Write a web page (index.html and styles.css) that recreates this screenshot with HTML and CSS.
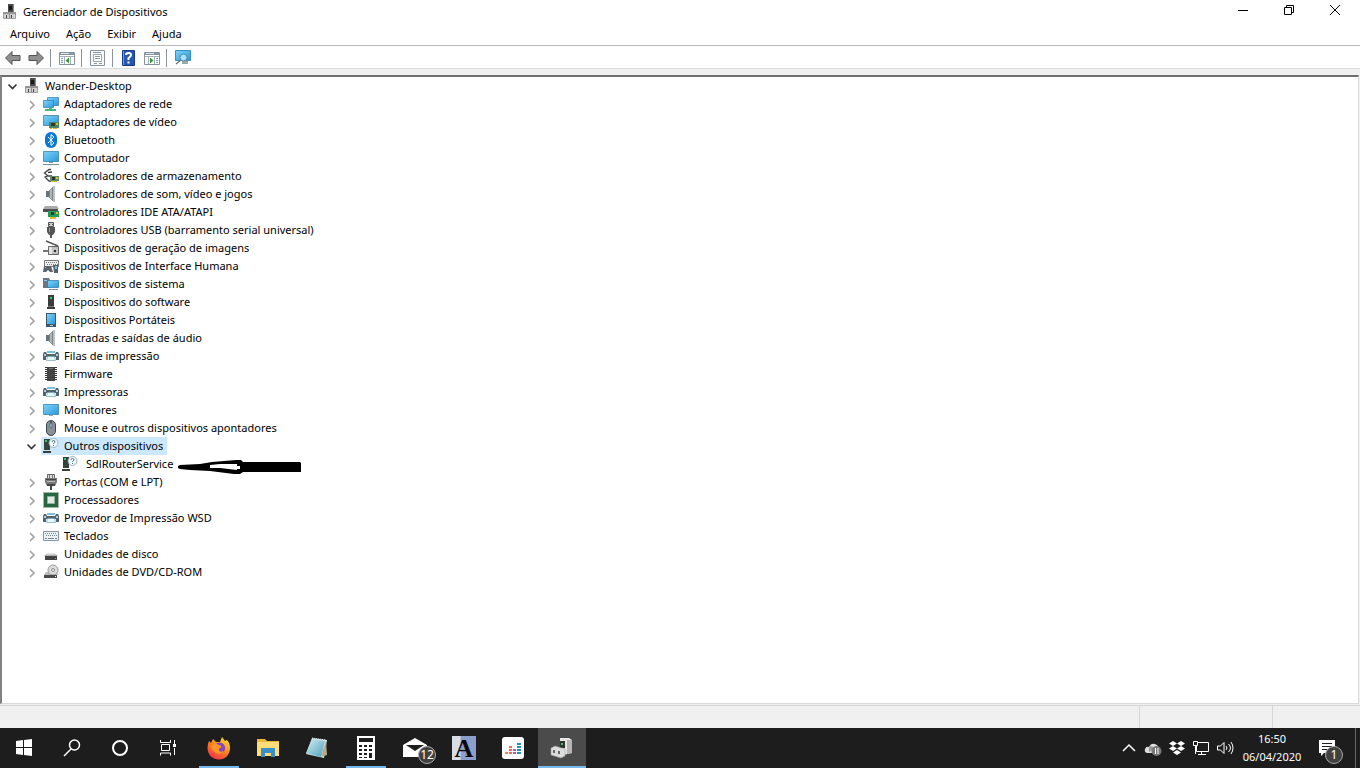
FILE: index.html
```html
<!DOCTYPE html>
<html lang="pt-BR">
<head>
<meta charset="utf-8">
<title>Gerenciador de Dispositivos</title>
<link rel="stylesheet" href="styles.css">
</head>
<body>
<svg class="sprite" aria-hidden="true">
  <defs>
    <linearGradient id="g-blue" x1="0" y1="0" x2="1" y2="1"><stop offset="0" stop-color="#7fd3f7"/><stop offset="1" stop-color="#2a98dc"/></linearGradient>
    <linearGradient id="g-grey" x1="0" y1="0" x2="1" y2="0"><stop offset="0" stop-color="#777"/><stop offset=".5" stop-color="#c8c8c8"/><stop offset="1" stop-color="#777"/></linearGradient>
    <linearGradient id="g-drive" x1="0" y1="0" x2="0" y2="1"><stop offset="0" stop-color="#f4f4f4"/><stop offset="1" stop-color="#a8a8a8"/></linearGradient>
    <linearGradient id="g-fox" x1=".8" y1="0" x2=".2" y2="1"><stop offset="0" stop-color="#ffe226"/><stop offset=".45" stop-color="#ff8a1c"/><stop offset="1" stop-color="#f5274f"/></linearGradient>
    <linearGradient id="g-note" x1="0" y1="0" x2="1" y2="1"><stop offset="0" stop-color="#d5f0f5"/><stop offset="1" stop-color="#4a9fb8"/></linearGradient>
    <symbol id="pc" viewBox="0 0 16 16"><path fill="#4a4a4a" d="M6 0h6v9H6z"/><path fill="#1a1a1a" d="M7 2h3v4H7z"/><path fill="#888" d="M11 0h1v9h-1z"/><path fill="#999" d="M1 8h13v2H1z"/><path fill="#d2d2d2" stroke="#8a8a8a" stroke-width=".8" d="M1.500 9.500h6v5h-6zM7.500 9.500h6v5h-6z"/><path fill="#444" d="M4 11h1v3H4zm5 0h1v3H9z"/></symbol>
    <symbol id="net" viewBox="0 0 16 16"><path fill="url(#g-blue)" stroke="#297eac" stroke-width=".7" d="M4.500 1.500h11v8h-11z"/><path fill="url(#g-blue)" stroke="#297eac" stroke-width=".7" d="M.500 4.500h10v7H.500z"/><path fill="#43b77a" d="M6 11.500h3V13h4v2H2v-2h4z"/></symbol>
    <symbol id="video" viewBox="0 0 16 16"><path fill="url(#g-blue)" stroke="#376f8c" stroke-width=".7" d="M.500 1.500h15v10H.500z"/><path fill="#4d8568" d="M6 8h10v6H6z"/><path fill="#253d31" d="M8 9h4v3H8z"/><path fill="#ecb51c" d="M7 14h2v1H7zm3 0h4v1h-4zm3-5h2v2h-2z"/></symbol>
    <symbol id="bt" viewBox="0 0 16 16"><rect x="2" width="12" height="16" rx="6" fill="#0878d4"/><path d="M5 5l6 6-3 2.500v-11L11 5l-6 6" fill="none" stroke="#fff"/></symbol>
    <symbol id="monitor" viewBox="0 0 16 16"><path fill="url(#g-blue)" stroke="#3586b1" stroke-width=".8" d="M.500 2.500h15v10H.500z"/><path fill="#98a7b0" d="M6 13h4v1H6z"/></symbol>
    <symbol id="computer" viewBox="0 0 16 16"><path fill="url(#g-blue)" stroke="#3586b1" stroke-width=".8" d="M.500 1.500h15v10H.500z"/><path fill="#7690a0" d="M0 14h16v1H0zm6-2h4v1H6z"/></symbol>
    <symbol id="storage" viewBox="0 0 16 16"><path fill="none" stroke="#444" stroke-width="1.300" d="M8 1.500L6 1.500 1.500 5 5 8h4M9 4L5 4.500M5 8l-3 1 4 4h2"/><path fill="#668672" d="M7 8h9v5H7z"/><path fill="#26372c" d="M9 9h3v3H9z"/><path fill="#d3c538" d="M8 13h6v1H8zm5-4h2v2h-2z"/></symbol>
    <symbol id="speaker" viewBox="0 0 16 16"><path fill="#67727a" d="M3 5h3v6H3z"/><path fill="url(#g-grey)" stroke="#65727c" stroke-width=".6" d="M6 5l4-4v14l-4-4z"/><path fill="#b7c2c9" d="M10 0h2v16h-2z"/></symbol>
    <symbol id="ide" viewBox="0 0 16 16"><path fill="#aaa" d="M2 2h12l2 3H0z"/><path fill="#4e4e4e" d="M0 5h15v3H0z"/><path fill="#249c58" d="M5 7h11v6H5z"/><path fill="#263e31" d="M8 8h3v3H8z"/><path fill="#e8b92f" d="M7 13h6v2H7zm6-5h2v2h-2z"/></symbol>
    <symbol id="usb" viewBox="0 0 16 16"><path fill="#ccc" stroke="#555" d="M5.500.500h5v4h-5z"/><path fill="#555" d="M6 2h1v1H6zm3 0h1v1H9zM4 5h8v5l-2 3H6l-2-3z"/><path fill="#999" d="M6 6h1v4H6z"/><path fill="#555" d="M7 12h2v4H7z"/></symbol>
    <symbol id="camera" viewBox="0 0 16 16"><path stroke="#555" stroke-width="1.500" d="M3 1l12 5"/><path stroke="#777" stroke-width="2" d="M0 11h6"/><path fill="#bbb" stroke="#666" d="M5.500 6.500h10v8h-10z"/><path fill="#e5e5e5" d="M6 7h3v7H6z"/><circle cx="12" cy="11" r="2" fill="#333" stroke="#eee"/></symbol>
    <symbol id="hid" viewBox="0 0 16 16"><path fill="#eee" stroke="#777" d="M1.500 2.500h14v6h-14z"/><path stroke="#777" stroke-dasharray="1 1" d="M3 4.500h12M4 6.500h11"/><path fill="#58636b" d="M1 8h7l2 6H7l-2-2-2 2H0zM10 7h5v8h-4z"/><path fill="#79bde9" d="M2 9h1v1H2zm10-1h2v3h-2z"/></symbol>
    <symbol id="system" viewBox="0 0 16 16"><path fill="#697783" d="M0 2h6l1 2v8H0z"/><path fill="#86ccff" d="M1 4h3v1H1z"/><path fill="url(#g-blue)" stroke="#2676a5" stroke-width=".7" d="M4.500 4.500h11v7h-11z"/><path fill="#80919c" d="M6 13h9v1H6z"/></symbol>
    <symbol id="software" viewBox="0 0 16 16"><path fill="#3b3b3b" d="M5 1h6v11H5zM4 13h8v2H4z"/><path fill="#777" d="M5 12h6v1H5z"/><path fill="#27d56c" d="M7 3h2v2H7z"/></symbol>
    <symbol id="portable" viewBox="0 0 16 16"><path fill="#3a596b" d="M3 1h10v14H3z"/><path fill="url(#g-blue)" d="M4 2h8v10H4z"/><path fill="#c0d4dd" d="M7 13h3v1H7z"/></symbol>
    <symbol id="printer" viewBox="0 0 16 16"><path fill="#7cc0e0" d="M4 3h8v2H4z"/><path fill="#506570" d="M1 4h2l1 2h8l1-2h2l1 2v6h-3V9H3v3H0V6z"/><path fill="#c1cdd4" d="M1 6h2v2H1zm12 0h2v2h-2z"/><path fill="#e6f9ff" stroke="#77a5b7" stroke-width=".7" d="M4.500 8.500h7l1 4h-9z"/></symbol>
    <symbol id="chip" viewBox="0 0 16 16"><path fill="#444" d="M4 1h8v14H4z"/><path stroke="#333" stroke-width="2" stroke-dasharray="1 1" d="M3 1v14M13 1v14"/><path fill="#777" d="M6 2h4v1H6z"/></symbol>
    <symbol id="mouse" viewBox="0 0 16 16"><rect x="3.500" y=".500" width="9" height="15" rx="4.500" fill="#899097" stroke="#3c454d"/><path stroke="#333" d="M8 1v6"/><rect x="7" y="3" width="2" height="5" rx="1" fill="#9cd7f3" stroke="#334" stroke-width=".6"/></symbol>
    <symbol id="unknown" viewBox="0 0 16 16"><path fill="#34423b" d="M1 1h6v11H1zM0 13h8v2H0z"/><path fill="#37c770" d="M2 2h2v2H2z"/><circle cx="10.500" cy="5" r="4.500" fill="#f5faff" stroke="#89a2b0" stroke-width=".8"/><path fill="none" stroke="#466e7c" d="M9 4q0-1.500 1.500-1.500t1.500 1.500q0 .7-1.500 1.500v.5M10.500 7v1"/></symbol>
    <symbol id="port" viewBox="0 0 16 16"><path fill="#ddd" stroke="#666" d="M4.500.500h7v4h-7z"/><path stroke="#777" d="M6.500 1v3M9.500 1v3"/><path fill="#777" d="M2 4h12v4l-2 4H4L2 8z"/><path fill="#444" d="M3 5h10v1H3zm1 5h8v2H4zm3 2h2v4H7z"/><path stroke="#bbb" d="M4 7.500h8"/></symbol>
    <symbol id="cpu" viewBox="0 0 16 16"><path fill="#286642" d="M1 1h14v14H1z"/><path fill="none" stroke="#477556" stroke-dasharray="1 1" d="M.500.500h15v15H.500z"/><path fill="#e2e8e3" stroke="#95b19d" d="M4.500 4.500h7v7h-7z"/></symbol>
    <symbol id="keyboard" viewBox="0 0 16 16"><path fill="#edf2f5" stroke="#8496a3" d="M.500 3.500h15v9H.500z"/><path stroke="#758896" stroke-dasharray="1 1" d="M2 5.500h12M3 7.500h11"/><path stroke="#758896" d="M2 10.500h2m1 0h6m1 0h2"/></symbol>
    <symbol id="disk" viewBox="0 0 16 16"><path fill="url(#g-drive)" d="M4 7h8l3 3H1z"/><path fill="#444" d="M2 10h12v4H2z"/><path fill="#3dd478" d="M12 12h1v1h-1z"/></symbol>
    <symbol id="dvd" viewBox="0 0 16 16"><path fill="#bbb" d="M3 8h11l1 3H1z"/><circle cx="10" cy="6" r="5" fill="#ddd" stroke="#999"/><circle cx="10" cy="6" r="1.500" fill="#fff" stroke="#888"/><path fill="#4b4b4b" d="M1 11h13v3H1z"/><path fill="#eee" d="M12 12h1v1h-1z"/></symbol>
    <symbol id="chev" viewBox="0 0 12 12"><path fill="none" stroke="currentColor" stroke-width="1.600" d="M5 3l4 4-4 4"/></symbol>
    <symbol id="chev-down" viewBox="0 0 12 12"><path fill="none" stroke="currentColor" stroke-width="1.600" d="M2.500 4.500l4 4 4-4"/></symbol>
  </defs>
</svg>

<div class="screen">
  <header class="titlebar">
    <svg class="icon"><use href="#pc"/></svg>
    <h1 class="title">Gerenciador de Dispositivos</h1>
    <div class="window-buttons">
      <button class="window-button" aria-label="Minimizar"><svg viewBox="0 0 12 12"><path d="M1 6.500h10"/></svg></button>
      <button class="window-button" aria-label="Restaurar"><svg viewBox="0 0 12 12"><path d="M1.500 3.500h7v7h-7zM3.500 3.500v-2h7v7h-2"/></svg></button>
      <button class="window-button" aria-label="Fechar"><svg viewBox="0 0 12 12"><path d="M1 1l10 10M11 1L1 11"/></svg></button>
    </div>
  </header>
  <nav class="menubar">
    <button class="menu">Arquivo</button><button class="menu">Ação</button><button class="menu">Exibir</button><button class="menu">Ajuda</button>
  </nav>
  <div class="toolbar" role="toolbar" aria-label="Ferramentas">
    <button class="tool" aria-label="Voltar"><svg viewBox="0 0 18 18"><path fill="#909090" stroke="#555" d="M1.500 9L8 2.500v4h8v5H8v4z"/></svg></button>
    <button class="tool" aria-label="Avançar"><svg viewBox="0 0 18 18"><path fill="#909090" stroke="#555" d="M16.500 9L10 2.500v4H2v5h8v4z"/></svg></button>
    <span class="separator"></span>
    <button class="tool" aria-label="Mostrar árvore"><svg viewBox="0 0 18 18"><path fill="#fff" stroke="#8794a0" d="M1.500 3.500h15v12h-15z"/><path fill="#8794a0" d="M2 4h14v2H2z"/><path stroke="#dfe7ed" d="M3 4.500h8"/><path stroke="#a6b0b9" d="M2 7.500h14M6.500 8v7M12.500 8v7"/><path stroke="#6c9bc5" d="M3 9.500h2m-2 2h2m-2 2h2"/><path fill="#39953d" d="M11 8.500v6l-3.500-3z"/></svg></button>
    <span class="separator"></span>
    <button class="tool" aria-label="Propriedades"><svg viewBox="0 0 18 18"><path fill="#f5f7f8" stroke="#87929a" d="M1.500 1.500h14v15h-14z"/><path fill="#fff" stroke="#9ba5ac" d="M4.500 5.500h8v7h-8z"/><path stroke="#8b98a3" d="M4 3.500h8M6 7.500h5m-5 2h5M5 14.500h3m2 0h3"/></svg></button>
    <span class="separator"></span>
    <button class="tool" aria-label="Ajuda"><svg viewBox="0 0 18 18"><path fill="#2856b3" stroke="#163c85" d="M2.500 1.500h12v15h-12z"/><path stroke="#769ddd" d="M3.500 2v14"/><path fill="none" stroke="#fff" stroke-width="2" d="M6 6q0-2 2.500-2T11 6q0 1.500-2.500 3v2M8.500 12.500v2"/></svg></button>
    <button class="tool" aria-label="Mostrar ações"><svg viewBox="0 0 18 18"><path fill="#fff" stroke="#8794a0" d="M1.500 3.500h15v12h-15z"/><path fill="#8794a0" d="M2 4h14v2H2z"/><path stroke="#dfe7ed" d="M3 4.500h8"/><path stroke="#a6b0b9" d="M2 7.500h14M5.500 8v7M11.500 8v7"/><path stroke="#6c9bc5" d="M13 9.500h2m-2 2h2m-2 2h2"/><path fill="#39953d" d="M7 8.500v6l3.500-3z"/></svg></button>
    <span class="separator"></span>
    <button class="tool" aria-label="Verificar alterações de hardware"><svg viewBox="0 0 18 18"><path fill="url(#g-blue)" stroke="#398fb9" d="M1.500 1.500h15v10h-15z"/><path fill="#9aa" d="M8 12h6v3H8z"/><circle cx="9.500" cy="8.500" r="3.500" fill="#a8e2ff" stroke="#518baa"/><path stroke="#678" stroke-width="1.500" d="M7 11l-5 4"/></svg></button>
  </div>

  <main class="tree-pane">
    <ul class="tree">
      <li>
        <div class="row root"><button class="expander open" aria-label="Recolher"><svg><use href="#chev-down"/></svg></button><span class="node"><svg class="icon"><use href="#pc"/></svg>Wander-Desktop</span></div>
        <ul class="tree">
          <li class="row"><button class="expander" aria-label="Expandir"><svg><use href="#chev"/></svg></button><span class="node"><svg class="icon"><use href="#net"/></svg>Adaptadores de rede</span></li>
          <li class="row"><button class="expander" aria-label="Expandir"><svg><use href="#chev"/></svg></button><span class="node"><svg class="icon"><use href="#video"/></svg>Adaptadores de vídeo</span></li>
          <li class="row"><button class="expander" aria-label="Expandir"><svg><use href="#chev"/></svg></button><span class="node"><svg class="icon"><use href="#bt"/></svg>Bluetooth</span></li>
          <li class="row"><button class="expander" aria-label="Expandir"><svg><use href="#chev"/></svg></button><span class="node"><svg class="icon"><use href="#computer"/></svg>Computador</span></li>
          <li class="row"><button class="expander" aria-label="Expandir"><svg><use href="#chev"/></svg></button><span class="node"><svg class="icon"><use href="#storage"/></svg>Controladores de armazenamento</span></li>
          <li class="row"><button class="expander" aria-label="Expandir"><svg><use href="#chev"/></svg></button><span class="node"><svg class="icon"><use href="#speaker"/></svg>Controladores de som, vídeo e jogos</span></li>
          <li class="row"><button class="expander" aria-label="Expandir"><svg><use href="#chev"/></svg></button><span class="node"><svg class="icon"><use href="#ide"/></svg>Controladores IDE ATA/ATAPI</span></li>
          <li class="row"><button class="expander" aria-label="Expandir"><svg><use href="#chev"/></svg></button><span class="node"><svg class="icon"><use href="#usb"/></svg>Controladores USB (barramento serial universal)</span></li>
          <li class="row"><button class="expander" aria-label="Expandir"><svg><use href="#chev"/></svg></button><span class="node"><svg class="icon"><use href="#camera"/></svg>Dispositivos de geração de imagens</span></li>
          <li class="row"><button class="expander" aria-label="Expandir"><svg><use href="#chev"/></svg></button><span class="node"><svg class="icon"><use href="#hid"/></svg>Dispositivos de Interface Humana</span></li>
          <li class="row"><button class="expander" aria-label="Expandir"><svg><use href="#chev"/></svg></button><span class="node"><svg class="icon"><use href="#system"/></svg>Dispositivos de sistema</span></li>
          <li class="row"><button class="expander" aria-label="Expandir"><svg><use href="#chev"/></svg></button><span class="node"><svg class="icon"><use href="#software"/></svg>Dispositivos do software</span></li>
          <li class="row"><button class="expander" aria-label="Expandir"><svg><use href="#chev"/></svg></button><span class="node"><svg class="icon"><use href="#portable"/></svg>Dispositivos Portáteis</span></li>
          <li class="row"><button class="expander" aria-label="Expandir"><svg><use href="#chev"/></svg></button><span class="node"><svg class="icon"><use href="#speaker"/></svg>Entradas e saídas de áudio</span></li>
          <li class="row"><button class="expander" aria-label="Expandir"><svg><use href="#chev"/></svg></button><span class="node"><svg class="icon"><use href="#printer"/></svg>Filas de impressão</span></li>
          <li class="row"><button class="expander" aria-label="Expandir"><svg><use href="#chev"/></svg></button><span class="node"><svg class="icon"><use href="#chip"/></svg>Firmware</span></li>
          <li class="row"><button class="expander" aria-label="Expandir"><svg><use href="#chev"/></svg></button><span class="node"><svg class="icon"><use href="#printer"/></svg>Impressoras</span></li>
          <li class="row"><button class="expander" aria-label="Expandir"><svg><use href="#chev"/></svg></button><span class="node"><svg class="icon"><use href="#monitor"/></svg>Monitores</span></li>
          <li class="row"><button class="expander" aria-label="Expandir"><svg><use href="#chev"/></svg></button><span class="node"><svg class="icon"><use href="#mouse"/></svg>Mouse e outros dispositivos apontadores</span></li>
          <li>
            <div class="row"><button class="expander open" aria-label="Recolher"><svg><use href="#chev-down"/></svg></button><span class="node selected"><svg class="icon"><use href="#unknown"/></svg>Outros dispositivos</span></div>
            <ul class="tree">
              <li class="row leaf"><span class="node"><svg class="icon"><use href="#unknown"/></svg>SdlRouterService</span>
                <svg class="arrow" viewBox="0 0 124 16"><path d="M0 7l2-1 20-1 12-2 24-2h5l2 2h57l1 1v9H65l-3 2h-6l-24-3-20-1-10-1-2-1z"/><path fill="#fff" d="M32 6l10-1h17v2h3v3h-3v1L42 9H32z"/></svg></li>
            </ul>
          </li>
          <li class="row"><button class="expander" aria-label="Expandir"><svg><use href="#chev"/></svg></button><span class="node"><svg class="icon"><use href="#port"/></svg>Portas (COM e LPT)</span></li>
          <li class="row"><button class="expander" aria-label="Expandir"><svg><use href="#chev"/></svg></button><span class="node"><svg class="icon"><use href="#cpu"/></svg>Processadores</span></li>
          <li class="row"><button class="expander" aria-label="Expandir"><svg><use href="#chev"/></svg></button><span class="node"><svg class="icon"><use href="#printer"/></svg>Provedor de Impressão WSD</span></li>
          <li class="row"><button class="expander" aria-label="Expandir"><svg><use href="#chev"/></svg></button><span class="node"><svg class="icon"><use href="#keyboard"/></svg>Teclados</span></li>
          <li class="row"><button class="expander" aria-label="Expandir"><svg><use href="#chev"/></svg></button><span class="node"><svg class="icon"><use href="#disk"/></svg>Unidades de disco</span></li>
          <li class="row"><button class="expander" aria-label="Expandir"><svg><use href="#chev"/></svg></button><span class="node"><svg class="icon"><use href="#dvd"/></svg>Unidades de DVD/CD-ROM</span></li>
        </ul>
      </li>
    </ul>
  </main>
  <div class="statusbar"><span class="status-main"></span><span class="status-a"></span><span class="status-b"></span></div>

  <footer class="taskbar">
    <div class="system-buttons">
      <button class="task" aria-label="Iniciar"><svg viewBox="0 0 24 24"><path fill="#fff" d="M4 5l7-1v7H4zm8-1l8-1v8h-8zM4 12h7v7l-7-1zm8 0h8v8l-8-1z"/></svg></button>
      <button class="task" aria-label="Pesquisar"><svg viewBox="0 0 24 24"><g fill="none" stroke="#fff" stroke-width="1.500"><circle cx="14.500" cy="9" r="5"/><path d="M11 13l-7 7"/></g></svg></button>
      <button class="task" aria-label="Cortana"><svg viewBox="0 0 24 24"><circle cx="12" cy="12" r="7" fill="none" stroke="#fff" stroke-width="2"/></svg></button>
      <button class="task" aria-label="Visão de tarefas"><svg viewBox="0 0 24 24"><path fill="none" stroke="#fff" d="M4.500 4v2.500h10V4M4.500 19.500V17h10v2.500M5.500 8.500h8v6h-8zM18.500 4v4m0 4v7"/><path fill="#fff" d="M17 8h3v3h-3z"/></svg></button>
    </div>
    <div class="apps">
      <button class="task running" aria-label="Firefox"><svg viewBox="0 0 24 24"><path fill="url(#g-fox)" d="M2 5l2 2 2-4 3 3 4 0 2-5 3 4 2-1q3 3 3 8c0 7-5 11.500-11 11.500S.500 19 .500 12q0-4 1.500-7z"/><circle cx="12.500" cy="12" r="5.500" fill="#743bc5"/><path fill="#ff9724" d="M4 9q4-3 8 0l4 1-4 3q0 3 5 2-3 5-8 2t-5-8z"/><path fill="#8a46d5" d="M12 7q6 1 5 6-2 4-5 2 3-1 2-5z"/></svg></button>
      <button class="task" aria-label="Explorador de Arquivos"><svg viewBox="0 0 24 24"><path fill="#e9b83f" d="M1 3h8l2 2h12v4H1z"/><path fill="#ffdc78" d="M1 6h22v14H1z"/><path fill="#398fc7" d="M5 12h14v9h-4v-4H9v4H5z"/></svg></button>
      <button class="task" aria-label="Bloco de Notas"><svg viewBox="0 0 24 24"><path fill="#d9e4e5" d="M7 2l15 2-3 18-18-4z"/><path fill="url(#g-note)" d="M7 3l13 2-4 16L1 17z"/><path stroke="#eee" stroke-dasharray="1 1" d="M7 2l14 2"/><path fill="#b5aa91" d="M16 21L21 5l1 14z"/></svg></button>
      <button class="task running" aria-label="Calculadora"><svg viewBox="0 0 24 24"><path fill="#fff" d="M3 0h18v24H3z"/><path fill="#1d1d1d" d="M5 2h14v4H5zM5 9h3v2H5zm5 0h3v2h-3zm5 0h3v2h-3zM5 13h3v2H5zm5 0h3v2h-3zm5 0h3v2h-3zM5 17h3v2H5zm5 0h3v2h-3zm5 0h3v5h-3zM5 21h3v1H5zm5 0h3v1h-3z"/></svg></button>
      <button class="task" aria-label="Email, 12 mensagens"><svg viewBox="0 0 24 24"><path fill="#fff" d="M0 9l12-7 12 7v12H0z"/><path fill="#1d1d1d" d="M3 9h18l-9 6z"/></svg><span class="badge mail-badge">12</span></button>
      <button class="task" aria-label="Dicionário"><span class="letter-icon">A</span></button>
      <button class="task" aria-label="Deezer"><svg viewBox="0 0 24 24"><rect x="1" y="1" width="22" height="22" rx="3" fill="#fff"/><g stroke-width="2"><path stroke="#f3883e" d="M4 17h3"/><path stroke="#ef6b4e" d="M8 17h3M8 14h3M8 11h3"/><path stroke="#b45f9a" d="M12 17h3M12 14h3"/><path stroke="#258fb5" d="M16 17h4M16 14h4M16 11h4M16 8h4"/></g></svg></button>
      <button class="task running active" aria-label="Gerenciador de Dispositivos"><svg viewBox="0 0 24 24"><path fill="#e5e5e1" d="M10 2l9 0 3 2v13l-9 2-3-3z"/><path fill="#b5b5b5" d="M17 4l5 0v13l-5 1z"/><path fill="#26372a" d="M10 5h5v7h-5z"/><path fill="#55b568" d="M11 7h2v2h-2z"/><path fill="#ddd" stroke="#999" stroke-width=".5" d="M1 12l4-2 10 3v7l-4 2-10-3z"/><path fill="#686868" d="M3 14h2v3H3zm5 1h2v3H8z"/></svg></button>
    </div>
    <div class="tray">
      <button class="tray-button" aria-label="Mostrar ícones ocultos"><svg viewBox="0 0 18 18"><path fill="none" stroke="#fff" stroke-width="1.500" d="M3 12l6-6 6 6"/></svg></button>
      <button class="tray-button" aria-label="OneDrive"><svg viewBox="0 0 18 18"><path fill="#ddd" d="M3 14q-3-1-2-4t4-2q2-4 6-3 3 1 4 4v5z"/><path fill="#999" d="M5 7q4 0 6 3l-6 3z"/><circle cx="12.500" cy="12" r="5" fill="#777"/><path stroke="#fff" d="M11.500 9v6M14 9v6"/></svg></button>
      <button class="tray-button" aria-label="Dropbox"><svg viewBox="0 0 18 18"><path fill="#fff" d="M5 2l4 2.500L5 7 1 4.500zM13 2l4 2.500L13 7 9 4.500zM5 7l4 2.500L5 12 1 9.500zM13 7l4 2.500-4 2.500-4-2.500zM9 11l4 2.500L9 16l-4-2.500z"/></svg></button>
      <button class="tray-button" aria-label="Rede"><svg viewBox="0 0 18 18"><path fill="none" stroke="#fff" d="M6 3.500h10.500v9H4.500V7M1.500 2.500h4v4h-4zM3.500 6v9M9.500 13v3M6 15.500h8"/></svg></button>
      <button class="tray-button" aria-label="Volume"><svg viewBox="0 0 18 18"><path fill="none" stroke="#fff" d="M1.500 7h3L8 3.500v11L4.500 11h-3zM10 7q2 2 0 4M12.500 5q4 4 0 8M15 3q4 6 0 12"/></svg></button>
      <button class="clock"><time>16:50</time><time>06/04/2020</time></button>
      <button class="notifications" aria-label="1 notificação"><svg viewBox="0 0 18 18"><path fill="#fff" d="M1 1h16v13H6l-3 3v-3H1z"/><path stroke="#1d1d1d" d="M4 4.500h10M4 7.500h10M4 10.500h6"/></svg><span class="badge notice-badge">1</span></button>
      <button class="show-desktop" aria-label="Mostrar área de trabalho"></button>
    </div>
  </footer>
</div>
</body>
</html>
```
FILE: styles.css
```css
* { box-sizing: border-box; }
body {
  margin: 0;
  font: 11px/18px "Noto Sans", "Open Sans", sans-serif;
  color: #000;
  background: #fff;
}
button {
  display: flex;
  align-items: center;
  justify-content: center;
  margin: 0;
  padding: 0;
  border: 0;
  background: transparent;
  color: inherit;
  font: inherit;
}
.sprite { position: absolute; width: 0; height: 0; }
.icon { width: 16px; height: 16px; flex: none; }
.screen { display: flex; flex-direction: column; min-height: 100vh; }

.titlebar { display: flex; align-items: center; height: 24px; padding-left: 2px; }
.title { flex: 1; margin: 0; padding-left: 5px; font-size: inherit; font-weight: 400; }
.window-buttons { display: flex; align-self: flex-start; padding-right: 2px; }
.window-button { width: 46px; height: 20px; }
.window-button svg { width: 12px; height: 12px; fill: none; stroke: #000; }

.menubar { display: flex; gap: 16px; height: 21px; padding: 0 0 2px 10px; }
.toolbar {
  display: flex;
  align-items: center;
  height: 24px;
  padding: 2px 0 0 4px;
  gap: 5px;
  border-top: 1px solid #b9b9b9;
  border-bottom: 1px solid #dcdcdc;
}
.tool, .tool svg { width: 18px; height: 18px; }
.separator { width: 1px; height: 18px; margin-right: 2px; background: #8b959e; }

.tree-pane {
  flex: 1;
  margin: 6px 1px 1px 0;
  border: solid #d9d9d9;
  border-width: 2px 1px 1px 2px;
  border-top-color: #6e6e6e;
  border-left-color: #828282;
  box-shadow: 0 0 0 6px #f0f0f0;
}
.tree { list-style: none; margin: 0; padding: 0; }
.tree .tree { padding-left: 19px; }
.row { display: flex; align-items: center; height: 18px; white-space: nowrap; }
.expander { width: 20px; height: 18px; color: #a0a0a0; }
.expander.open { color: #333; }
.expander svg { width: 12px; height: 12px; }
.node { display: flex; align-items: center; gap: 5px; height: 18px; padding: 0 4px 0 2px; }
.selected { background: #cce8ff; }
.leaf { position: relative; padding-left: 20px; }
.leaf .node { gap: 8px; }
.arrow { position: absolute; left: 138px; top: 4px; width: 124px; height: 16px; }

.statusbar { display: flex; height: 23px; background: #f0f0f0; border-top: 1px solid #d7d7d7; position: relative; }
.status-main { flex: 1; }
.status-a { width: 133px; border-left: 1px solid #d7d7d7; }
.status-b { width: 88px; border-left: 1px solid #d7d7d7; }

.taskbar { display: flex; height: 40px; background: #1d1d1d; color: #fff; position: relative; }
.system-buttons { display: flex; padding-right: 3px; }
.apps { display: flex; gap: 1px; }
.task { position: relative; width: 48px; height: 40px; }
.task svg { width: 24px; height: 24px; }
.running::after { content: ""; position: absolute; left: 4px; right: 4px; bottom: 0; height: 2px; background: #76b9ed; }
.active { background: #4b4b4b; }
.active::after { left: 0; right: 0; }
.badge {
  position: absolute;
  width: 18px;
  height: 18px;
  border: 1px solid #aaa;
  border-radius: 9px;
  background: #414141;
  font-size: 12px;
  line-height: 16px;
  text-align: center;
}
.mail-badge { left: 27px; top: 18px; }
.letter-icon {
  width: 24px;
  height: 24px;
  background: linear-gradient(90deg, #d8dce5 35%, #8c9fca 36%);
  color: #080808;
  font: bold 26px/25px "Liberation Serif", serif;
}
.tray { display: flex; margin-left: auto; }
.tray-button { width: 24px; height: 40px; }
.tray-button svg { width: 18px; height: 18px; }
.clock { flex-direction: column; width: 70px; }
.notifications { position: relative; width: 48px; padding-right: 8px; }
.notifications svg { width: 18px; height: 18px; }
.notice-badge { left: 18px; top: 18px; }
.show-desktop { width: 5px; border-left: 1px solid #666; }
```
